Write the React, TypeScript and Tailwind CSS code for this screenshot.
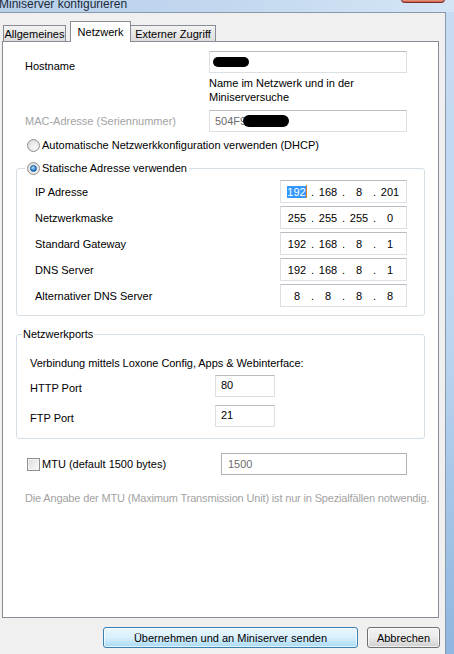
import React from "react";

const boxCls = "border border-[#dcdfe3] border-t-[#b9bdc2] bg-white";

function Radio({ checked }: { checked?: boolean }) {
  return (
    <span className="flex h-[13px] w-[13px] shrink-0 items-center justify-center rounded-full border border-[#8f8f8f] bg-[radial-gradient(circle_at_60%_65%,#fafafa,#d4d4d4)]">
      {checked && (
        <span className="h-[7px] w-[7px] rounded-full border border-[#1f5e98] bg-[radial-gradient(circle_at_40%_35%,#b8e4ff,#2a7fd0_60%,#134a85)]" />
      )}
    </span>
  );
}

function IpBox({ parts, selected }: { parts: string[]; selected?: boolean }) {
  return (
    <div className={`flex h-[23px] w-[127px] items-center pl-[3px] ${boxCls}`}>
      {parts.map((p, i) => (
        <React.Fragment key={i}>
          {i > 0 && <span className="w-[5px] text-center">.</span>}
          <span className="flex w-[26px] justify-center">
            {i === 0 && selected ? (
              <span className="flex items-center">
                <span className="bg-[#3399ff] leading-[12px] text-white">{p}</span>
                <span className="h-[13px] w-px bg-[#d9822b]" />
              </span>
            ) : (
              p
            )}
          </span>
        </React.Fragment>
      ))}
    </div>
  );
}

const ipRows: { label: string; parts: string[]; selected?: boolean }[] = [
  { label: "IP Adresse", parts: ["192", "168", "8", "201"], selected: true },
  { label: "Netzwerkmaske", parts: ["255", "255", "255", "0"] },
  { label: "Standard Gateway", parts: ["192", "168", "8", "1"] },
  { label: "DNS Server", parts: ["192", "168", "8", "1"] },
  { label: "Alternativer DNS Server", parts: ["8", "8", "8", "8"] },
];

export default function App() {
  return (
    <div className="flex h-[654px] w-[454px] flex-col overflow-hidden bg-[#c4daf1] font-['Liberation_Sans',Arial,sans-serif] text-[11px] text-black">
      {/* title bar */}
      <div className="flex h-[12px] shrink-0 items-start justify-between overflow-hidden bg-gradient-to-r from-[#b7d0ea] via-[#c3d8ef] to-[#d4e5f6]">
        <span className="-ml-[1px] -mt-[3px] text-[12px] leading-[14px] text-[#1d2a3a]">Miniserver konfigurieren</span>
        <div className="mr-[9px] -mt-[1px] h-[4px] w-[44px] rounded-b-[4px] border border-[#7b2f2a] bg-gradient-to-b from-[#e7a08c] to-[#c9543f]" />
      </div>

      <div className="flex flex-1">
        {/* dialog body */}
        <div className="flex w-[446px] flex-col border-r border-t border-[#8a99aa] bg-[#f0f0f0]">
          {/* tabs */}
          <div className="mt-[8px] flex items-end pl-[3px]">
            <div className="flex h-[16px] w-[63px] items-center justify-center border border-b-0 border-[#898c95] bg-gradient-to-b from-[#f3f3f3] to-[#dcdcdc] leading-[14px]">
              Allgemeines
            </div>
            <div className="relative z-10 -mb-px ml-[4px] flex h-[21px] w-[61px] items-start justify-center border border-b-0 border-[#898c95] bg-white pt-[3px] leading-[14px]">
              Netzwerk
            </div>
            <div className="-ml-px flex h-[16px] w-[86px] items-center justify-center border border-b-0 border-[#898c95] bg-gradient-to-b from-[#f3f3f3] to-[#dcdcdc] leading-[14px]">
              Externer Zugriff
            </div>
          </div>

          {/* tab panel */}
          <div className="ml-[2px] flex h-[577px] w-[437px] flex-col border border-[#898c95] bg-white leading-[14px]">
            {/* hostname */}
            <div className="mt-[9px] flex">
              <div className="w-[206px] pl-[22px] pt-[8px]">Hostname</div>
              <div className={`flex h-[22px] w-[198px] items-center pl-[3px] ${boxCls}`}>
                <span className="h-[10px] w-[36px] rounded-[5px] bg-black" />
              </div>
            </div>
            <div className="ml-[206px] mt-[3px] whitespace-nowrap">
              Name im Netzwerk und in der
              <br />
              Miniserversuche
            </div>

            {/* mac */}
            <div className="mt-[6px] flex">
              <div className="w-[206px] pl-[22px] pt-[4px] text-[#a3a3a3]">MAC-Adresse (Seriennummer)</div>
              <div className={`flex h-[22px] w-[198px] items-center pl-[5px] text-[#6d6d6d] ${boxCls}`}>
                504F9
                <span className="-ml-[3px] h-[12px] w-[46px] rounded-[6px] bg-black" />
              </div>
            </div>

            {/* dhcp */}
            <div className="ml-[24px] mt-[6px] flex h-[14px] items-center gap-[2px]">
              <Radio />
              <span>Automatische Netzwerkkonfiguration verwenden (DHCP)</span>
            </div>

            {/* static group */}
            <div className="mx-[13px] mt-[16px] flex flex-col rounded-[3px] border border-[#d5dfe5]">
              <div className="-mt-[8px] ml-[8px] flex h-[14px] items-center gap-[2px] self-start bg-white px-[2px]">
                <Radio checked />
                <span>Statische Adresse verwenden</span>
              </div>
              <div className="mt-[5px] flex flex-col gap-[3px] pb-[8px] pl-[18px] pr-[17px]">
                {ipRows.map((r) => (
                  <div key={r.label} className="flex items-center justify-between">
                    <span>{r.label}</span>
                    <IpBox parts={r.parts} selected={r.selected} />
                  </div>
                ))}
              </div>
            </div>

            {/* ports group */}
            <div className="mx-[13px] mt-[18px] flex flex-col rounded-[3px] border border-[#d5dfe5]">
              <div className="-mt-[8px] ml-[5px] h-[14px] self-start bg-white px-[1px]">Netzwerkports</div>
              <div className="mt-[15px] pl-[13px] tracking-[-0.05px]">Verbindung mittels Loxone Config, Apps &amp; Webinterface:</div>
              <div className="mt-[5px] flex pl-[13px]">
                <div className="w-[185px] pt-[6px]">HTTP Port</div>
                <div className={`h-[22px] w-[60px] pl-[5px] pt-[2px] ${boxCls}`}>80</div>
              </div>
              <div className="mt-[8px] flex pb-[11px] pl-[13px]">
                <div className="w-[185px] pt-[6px]">FTP Port</div>
                <div className={`h-[22px] w-[60px] pl-[5px] pt-[2px] ${boxCls}`}>21</div>
              </div>
            </div>

            {/* mtu */}
            <div className="mt-[14px] flex items-center pl-[24px]">
              <div className="flex w-[194px] items-center gap-[2px]">
                <span className="h-[13px] w-[13px] border border-[#8f8f8f] bg-gradient-to-br from-[#dcdcdc] to-[#fbfbfb] shadow-[inset_0_0_0_1px_#f4f4f4]" />
                <span>MTU (default 1500 bytes)</span>
              </div>
              <div className="h-[22px] w-[186px] border border-[#b0b4b8] bg-white pl-[6px] pt-[3px] text-[#6d6d6d]">1500</div>
            </div>
            <div className="mt-[16px] whitespace-nowrap pl-[22px] tracking-[-0.16px] text-[#a3a3a3]">
              Die Angabe der MTU (Maximum Transmission Unit) ist nur in Spezialfällen notwendig.
            </div>
          </div>

          {/* buttons */}
          <div className="mt-[9px] flex justify-end gap-[9px] pr-[5px]">
            <button className="h-[21px] w-[255px] rounded-[3px] border border-[#3c7fb1] bg-gradient-to-b from-[#eaf6fd] via-[#d9f0fc] to-[#a7d9f5] leading-[14px] shadow-[inset_0_0_0_1px_#ffffffb0]">
              Übernehmen und an Miniserver senden
            </button>
            <button className="h-[21px] w-[73px] rounded-[3px] border border-[#707070] bg-gradient-to-b from-[#f2f2f2] via-[#ebebeb] to-[#cfcfcf] leading-[14px] shadow-[inset_0_0_0_1px_#ffffffb0]">
              Abbrechen
            </button>
          </div>
        </div>

        {/* aero frame strip */}
        <div className="flex-1 bg-gradient-to-b from-[#c6dcf2] via-[#bcd6f0] to-[#8fb6df]" />
      </div>
    </div>
  );
}
